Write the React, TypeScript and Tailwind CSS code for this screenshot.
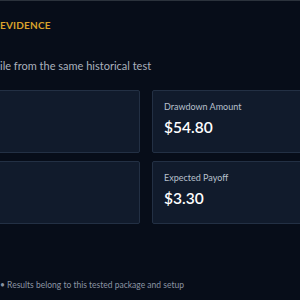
const metrics = [
  { label: "Max Drawdown", value: "12.4%" },
  { label: "Drawdown Amount", value: "$54.80" },
  { label: "Win Rate", value: "58.2%" },
  { label: "Expected Payoff", value: "$3.30" },
];

export default function App() {
  return (
    <div className="w-[300px] h-[300px] overflow-hidden bg-[#070d19] border-t border-[#2b323c] font-['Lato',sans-serif]">
      <div className="pt-[17px] text-[10px] font-bold tracking-[0.02em] text-[#d9a22b] leading-[14px]">
        EVIDENCE
      </div>
      <div className="mt-[26px] text-[11px] leading-[16px] text-[#aab1bd] whitespace-nowrap">
        ile from the same historical test
      </div>
      <div className="mt-[16px] -ml-[120px] grid grid-cols-[260px_260px] gap-x-[12px] gap-y-[8px]">
        {metrics.map((m, idx) => (
          <div
            key={idx}
            className="h-[63px] bg-[#111b2c] border border-[#233044] rounded-[2px] px-[11px] pt-[9px]"
          >
            <div className="text-[9px] leading-[14px] text-[#b8c0cc]">{m.label}</div>
            <div className="mt-[3px] text-[15.5px] leading-[20px] font-semibold text-white">{m.value}</div>
          </div>
        ))}
      </div>
      <div className="mt-[55px] text-[8.5px] leading-[12px] text-[#8b94a3] whitespace-nowrap">
        • Results belong to this tested package and setup
      </div>
    </div>
  );
}
